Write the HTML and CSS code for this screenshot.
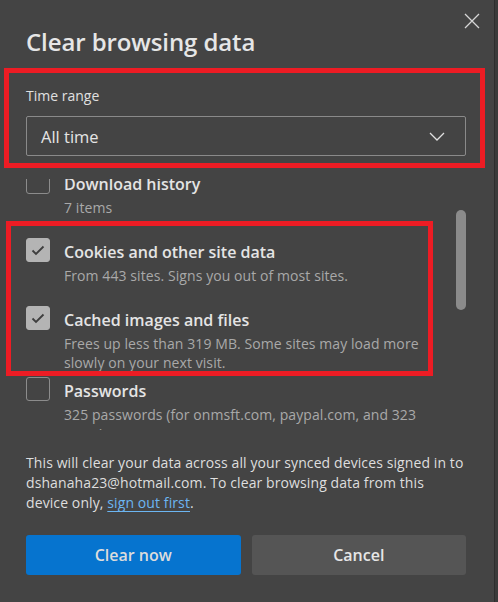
FILE: index.html
```html
<!DOCTYPE html>
<html lang="en">
<head>
<meta charset="utf-8">
<title>Clear browsing data</title>
<link rel="stylesheet" href="styles.css">
</head>
<body>
<div class="dialog">
  <div class="header">
    <h1 class="title">Clear browsing data</h1>
    <button class="close" aria-label="Close">
      <svg width="16" height="16" viewBox="0 0 16 16"><path d="M1 1 L15 15 M15 1 L1 15" stroke="#d6d6d6" stroke-width="1.3" fill="none"/></svg>
    </button>
  </div>

  <div class="range">
    <div class="range-label">Time range</div>
    <div class="select">
      <span class="select-value">All time</span>
      <svg class="chevron" width="16" height="9" viewBox="0 0 16 9"><path d="M1 1 L8 8 L15 1" stroke="#e0e0e0" stroke-width="1.3" fill="none"/></svg>
    </div>
  </div>

  <div class="list-wrap">
    <div class="list">
      <div class="list-inner">
        <div class="item">
          <span class="box"></span>
          <div class="text">
            <div class="item-title">Download history</div>
            <div class="item-sub">7 items</div>
          </div>
        </div>
        <div class="item">
          <span class="box checked"><svg width="24" height="24" viewBox="0 0 24 24"><path d="M6.5 12.5 L10 16 L17.5 8.5" stroke="#3e3e3e" stroke-width="1.8" fill="none"/></svg></span>
          <div class="text">
            <div class="item-title">Cookies and other site data</div>
            <div class="item-sub">From 443 sites. Signs you out of most sites.</div>
          </div>
        </div>
        <div class="item">
          <span class="box checked"><svg width="24" height="24" viewBox="0 0 24 24"><path d="M6.5 12.5 L10 16 L17.5 8.5" stroke="#3e3e3e" stroke-width="1.8" fill="none"/></svg></span>
          <div class="text">
            <div class="item-title">Cached images and files</div>
            <div class="item-sub">Frees up less than 319 MB. Some sites may load more slowly on your next visit.</div>
          </div>
        </div>
        <div class="item">
          <span class="box"></span>
          <div class="text">
            <div class="item-title">Passwords</div>
            <div class="item-sub">325 passwords (for onmsft.com, paypal.com, and 323 more)</div>
          </div>
        </div>
      </div>
    </div>
    <div class="scrollbar"><div class="thumb"></div></div>
  </div>

  <p class="note">This will clear your data across all your synced devices signed in to dshanaha23@hotmail.com. To clear browsing data from this device only, <a class="link" href="#">sign out first</a>.</p>

  <div class="actions">
    <button class="btn primary">Clear now</button>
    <button class="btn secondary">Cancel</button>
  </div>

  <div class="annot annot-range"></div>
  <div class="annot annot-items"></div>
</div>
</body>
</html>
```

FILE: styles.css
```css
* { box-sizing: border-box; }

html, body {
  margin: 0;
  padding: 0;
  background: #3b3b3b;
}

body {
  font-family: "Open Sans", "Noto Sans", "Liberation Sans", sans-serif;
  color: #e2e2e2;
  width: 498px;
  height: 602px;
  overflow: hidden;
}

.dialog {
  position: relative;
  width: 495px;
  height: 602px;
  background: #444444;
  border-right: 1px solid #2e2e2e;
  padding: 0 28px 0 26px;
  display: flex;
  flex-direction: column;
}

.header {
  display: flex;
  justify-content: space-between;
  align-items: flex-start;
}

.title {
  margin: 24px 0 0 0;
  font-size: 24px;
  line-height: 36px;
  font-weight: 600;
  color: #e6e6e6;
  letter-spacing: -0.1px;
}

.close {
  margin: 13px -14px 0 0;
  padding: 0;
  border: 0;
  background: transparent;
  width: 16px;
  height: 16px;
  display: flex;
}

.range {
  margin-top: 26px;
}

.range-label {
  font-size: 14px;
  line-height: 20px;
  color: #e0e0e0;
}

.select {
  margin-top: 10px;
  height: 40px;
  border: 1px solid #8a8a8a;
  border-radius: 2px;
  display: flex;
  align-items: center;
  justify-content: space-between;
  padding: 0 20px 0 14px;
}

.select-value {
  font-size: 16.5px;
  color: #e4e4e4;
}

.list-wrap {
  margin-top: 23px;
  height: 251px;
  display: flex;
}

.list {
  flex: 1;
  overflow: hidden;
}

.list-inner {
  margin-top: -9px;
}

.item {
  display: flex;
  gap: 14px;
  align-items: flex-start;
  min-height: 68px;
  padding-bottom: 5px;
}

.box {
  flex: none;
  width: 24px;
  height: 24px;
  border: 1px solid #8c8c8c;
  border-radius: 3px;
  display: flex;
}

.box.checked {
  background: #b4b4b4;
  border-color: #b4b4b4;
}

.box.checked svg {
  margin: -1px;
}

.text {
  width: 360px;
  margin-top: 2px;
}

.item-title {
  font-size: 16px;
  line-height: 24px;
  font-weight: 600;
  color: #e4e4e4;
}

.item-sub {
  margin-top: 2px;
  font-size: 14px;
  line-height: 19px;
  color: #a9a9a9;
  letter-spacing: 0.08px;
}

.scrollbar {
  width: 10px;
  flex: none;
}

.thumb {
  margin-top: 31px;
  width: 10px;
  height: 100px;
  border-radius: 5px;
  background: #8b8b8b;
}

.note {
  margin: 23px 0 0 0;
  font-size: 14px;
  line-height: 20px;
  color: #dedede;
  letter-spacing: 0.1px;
}

.link {
  color: #6cb6f2;
  text-decoration: underline;
  text-underline-offset: 3px;
}

.actions {
  margin-top: 22px;
  display: flex;
  gap: 11px;
}

.btn {
  flex: 1;
  height: 40px;
  border: 0;
  border-radius: 3px;
  font-family: inherit;
  font-size: 16px;
  font-weight: 600;
  color: #e6e6e6;
}

.primary {
  background: #0674cf;
  color: #dcdcdc;
}

.secondary {
  background: #555555;
}

.annot {
  position: absolute;
  border: 5px solid #ed1c24;
  pointer-events: none;
}

.annot-range {
  left: 4px;
  top: 68px;
  width: 481px;
  height: 100px;
}

.annot-items {
  left: 6px;
  top: 221px;
  width: 427px;
  height: 155px;
}
```
